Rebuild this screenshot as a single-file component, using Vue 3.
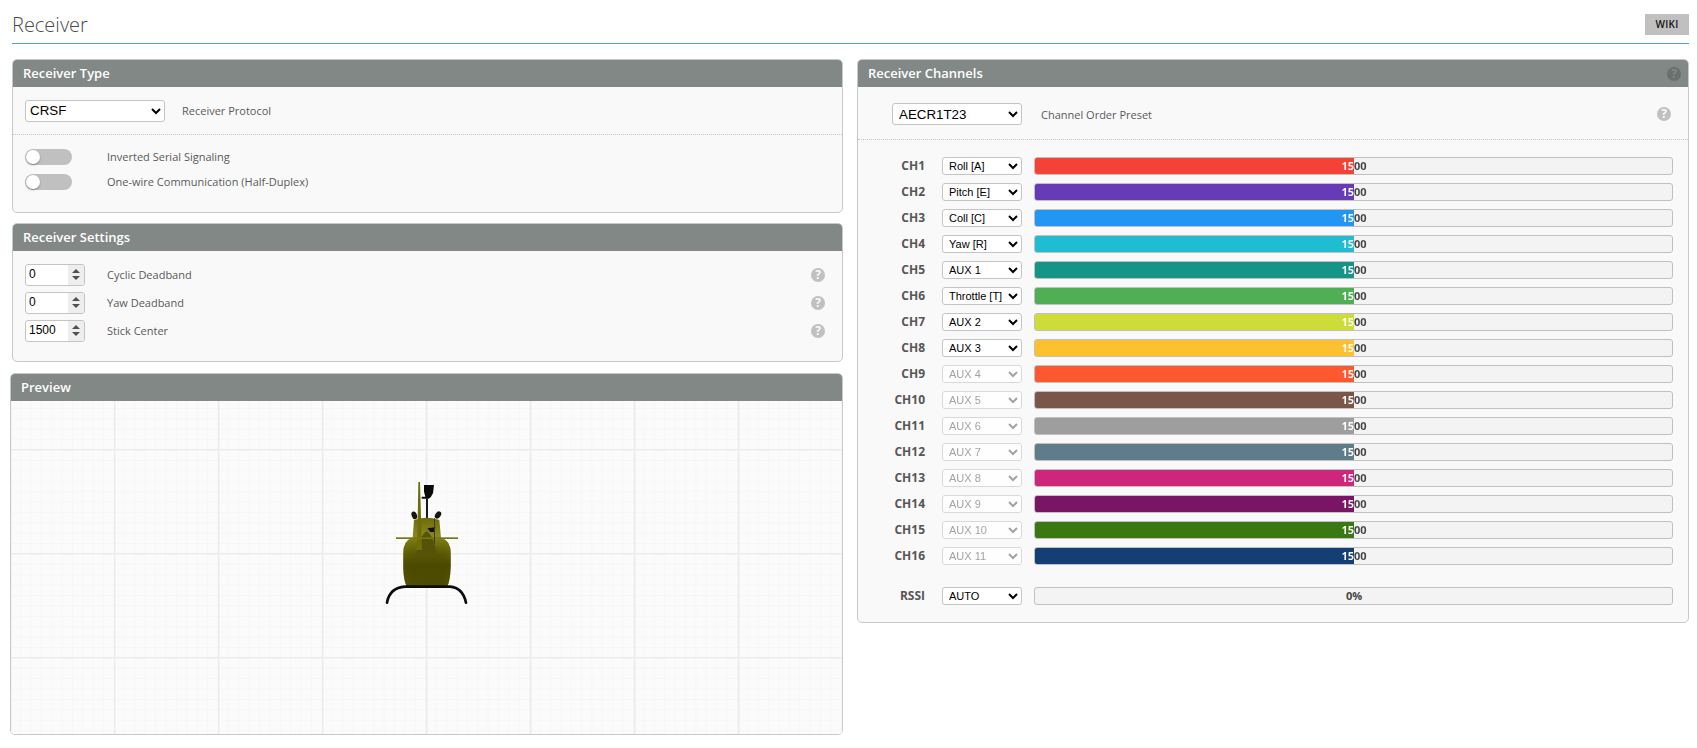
<script setup>
const channels = [
  { name: 'CH1', map: 'Roll [A]', color: '#f44336' },
  { name: 'CH2', map: 'Pitch [E]', color: '#673ab7' },
  { name: 'CH3', map: 'Coll [C]', color: '#2196f3' },
  { name: 'CH4', map: 'Yaw [R]', color: '#1fbcd2' },
  { name: 'CH5', map: 'AUX 1', color: '#159588' },
  { name: 'CH6', map: 'Throttle [T]', color: '#50ae55' },
  { name: 'CH7', map: 'AUX 2', color: '#cddc39' },
  { name: 'CH8', map: 'AUX 3', color: '#fdc02f' },
  { name: 'CH9', map: 'AUX 4', color: '#fe5830', off: true },
  { name: 'CH10', map: 'AUX 5', color: '#7b5548', off: true },
  { name: 'CH11', map: 'AUX 6', color: '#9e9e9e', off: true },
  { name: 'CH12', map: 'AUX 7', color: '#607c8a', off: true },
  { name: 'CH13', map: 'AUX 8', color: '#cf267d', off: true },
  { name: 'CH14', map: 'AUX 9', color: '#7a1464', off: true },
  { name: 'CH15', map: 'AUX 10', color: '#3a7814', off: true },
  { name: 'CH16', map: 'AUX 11', color: '#143f75', off: true },
]

const settings = [
  { label: 'Cyclic Deadband', value: 0 },
  { label: 'Yaw Deadband', value: 0 },
  { label: 'Stick Center', value: 1500 },
]
</script>

<template>
  <div class="page">
    <div class="title-bar">
      <span class="title">Receiver</span>
      <a class="wiki">WIKI</a>
    </div>

    <div class="columns">
      <div class="left">
        <section class="panel type-panel">
          <div class="panel-head">Receiver Type</div>
          <div class="proto-row">
            <select class="sel-proto"><option>CRSF</option></select>
            <span class="lbl">Receiver Protocol</span>
          </div>
          <div class="toggles">
            <div class="toggle-row">
              <span class="toggle"><i></i></span>
              <span class="lbl lbl-up">Inverted Serial Signaling</span>
            </div>
            <div class="toggle-row">
              <span class="toggle"><i></i></span>
              <span class="lbl lbl-up">One-wire Communication (Half-Duplex)</span>
            </div>
          </div>
        </section>

        <section class="panel settings-panel">
          <div class="panel-head">Receiver Settings</div>
          <div class="settings">
            <div v-for="s in settings" :key="s.label" class="setting-row">
              <div class="num-box">
                <input class="num" type="number" :value="s.value" />
                <span class="stepper"><i class="up"></i><i class="down"></i></span>
              </div>
              <span class="lbl">{{ s.label }}</span>
              <span class="help">?</span>
            </div>
          </div>
        </section>

        <section class="panel preview-panel">
          <div class="panel-head">Preview</div>
          <div class="preview">
            <!-- viewBox is 3x the drawn size, traced from the model -->
            <svg class="heli" width="180" height="170" viewBox="0 0 540 510">
              <defs>
                <linearGradient id="bodySide" x1="0" y1="0" x2="1" y2="0">
                  <stop offset="0" stop-color="#8c8b22" />
                  <stop offset="0.16" stop-color="#5a5804" />
                  <stop offset="0.84" stop-color="#4f4d00" />
                  <stop offset="1" stop-color="#8c8b26" />
                </linearGradient>
                <linearGradient id="bodyTop" x1="0" y1="0" x2="0" y2="1">
                  <stop offset="0" stop-color="#807e16" />
                  <stop offset="0.34" stop-color="#595700" stop-opacity="0.85" />
                  <stop offset="0.55" stop-color="#4c4a00" />
                  <stop offset="1" stop-color="#4c4a00" stop-opacity="0.8" />
                </linearGradient>
                <linearGradient id="cabin" x1="0" y1="0" x2="0" y2="1">
                  <stop offset="0" stop-color="#6f6d0c" />
                  <stop offset="1" stop-color="#8b8a22" />
                </linearGradient>
              </defs>
              <path d="M252 105 H282 L279 130 L272 142 L266 146 H245 V140 L256 140 L252 125 Z" fill="#0a0a0a" />
              <rect x="258" y="145" width="6" height="60" fill="#1a1a1a" />
              <ellipse cx="223" cy="196" rx="8" ry="12" transform="rotate(-20 223 196)" fill="#16160c" />
              <ellipse cx="294" cy="195" rx="8" ry="12" transform="rotate(35 294 195)" fill="#16160c" />
              <path d="M218 264 L222 210 Q260 196 298 210 L303 264 Z" fill="url(#cabin)" />
              <path d="M190 310 Q190 272 216 265 L304 265 Q332 272 332 310 L332 350 Q330 395 322 408 L200 408 Q190 390 190 350 Z" fill="url(#bodySide)" />
              <path d="M190 310 Q190 272 216 265 L304 265 Q332 272 332 310 L332 350 Q330 395 322 408 L200 408 Q190 390 190 350 Z" fill="url(#bodyTop)" />
              <path d="M226 320 Q238 258 260 243 Q282 258 292 320 Z" fill="#55530a" />
              <path d="M235 96 H240 L245 266 L246 300 H228 L232 266 Z" fill="#6f6d08" />
              <rect x="168" y="262" width="186" height="5" fill="#77750c" />
              <path d="M262 235 L286 232 L284 246 L271 246 Z" fill="#111" />
              <rect x="282" y="205" width="3" height="75" fill="#3a3c22" />
              <path d="M141 458 C146 430 165 412 195 410 H330 C355 412 372 430 378 458" fill="none" stroke="#0c0c0c" stroke-width="8" stroke-linecap="round" />
            </svg>
          </div>
        </section>
      </div>

      <section class="panel channels-panel">
        <div class="panel-head head-help">
          Receiver Channels
          <span class="help help-dark">?</span>
        </div>
        <div class="preset-row">
          <select class="sel-preset"><option>AECR1T23</option></select>
          <span class="lbl">Channel Order Preset</span>
          <span class="help">?</span>
        </div>
        <div class="bars">
          <div v-for="c in channels" :key="c.name" class="bar-row">
            <span class="ch">{{ c.name }}</span>
            <select class="sel-ch" :disabled="c.off"><option>{{ c.map }}</option></select>
            <div class="meter meter-on" :style="{ '--fill': c.color }">1500</div>
          </div>
          <div class="bar-row rssi-row">
            <span class="ch">RSSI</span>
            <select class="sel-ch"><option>AUTO</option></select>
            <div class="meter">0%</div>
          </div>
        </div>
      </section>
    </div>
  </div>
</template>

<style>
html, body {
  margin: 0;
  background: #fff;
  overflow: hidden;
}
</style>

<style scoped>
.page {
  box-sizing: border-box;
  width: 1697px;
  height: 748px;
  padding: 0 8px 0 12px;
  font-family: "Open Sans", "Liberation Sans", sans-serif;
  overflow: hidden;
}
.title-bar {
  display: flex;
  justify-content: space-between;
  align-items: flex-start;
  height: 43px;
  border-bottom: 1px solid #5ba0d0;
}
.title {
  font-size: 20px;
  font-weight: 300;
  color: #4a4a4a;
  line-height: 27px;
  margin-top: 11px;
}
.wiki {
  margin-top: 14px;
  width: 44px;
  height: 21px;
  background: #c0c0c0;
  color: #111;
  font-size: 10px;
  font-weight: 600;
  letter-spacing: 0.3px;
  line-height: 21px;
  text-align: center;
}
.columns {
  display: flex;
  gap: 14px;
  margin-top: 15px;
  align-items: flex-start;
}
.left {
  width: 831px;
  display: flex;
  flex-direction: column;
  gap: 10px;
}
.panel {
  box-sizing: border-box;
  border: 1px solid #c8c8c8;
  border-radius: 5px;
  background: #f9f9f9;
  overflow: hidden;
}
.panel-head {
  height: 27px;
  background: #828885;
  color: #fff;
  font-size: 13px;
  font-weight: 600;
  line-height: 27px;
  padding-left: 10px;
}
.head-help {
  display: flex;
  justify-content: space-between;
  align-items: center;
  padding-right: 7px;
}
.lbl {
  font-size: 11px;
  color: #595959;
}
.lbl-up {
  margin-bottom: 2px;
}
.type-panel {
  height: 154px;
}
.proto-row {
  box-sizing: border-box;
  display: flex;
  align-items: center;
  gap: 17px;
  height: 48px;
  padding-left: 12px;
  border-bottom: 1px dotted #c4c4c4;
}
select {
  box-sizing: border-box;
  border: 1px solid #c4c4c4;
  border-radius: 3px;
  background-color: #fff;
  color: #000;
  font-family: "Liberation Sans", sans-serif;
}
.sel-proto {
  width: 140px;
  height: 22px;
  font-size: 13.33px;
  padding-left: 0;
}
.toggles {
  display: flex;
  flex-direction: column;
  gap: 9px;
  padding: 14px 0 0 12px;
}
.toggle-row {
  display: flex;
  align-items: center;
  gap: 35px;
  height: 16px;
}
.toggle {
  display: block;
  box-sizing: border-box;
  width: 47px;
  height: 16px;
  border-radius: 8px;
  background: #c0c0c0;
  padding: 1px;
}
.toggle i {
  display: block;
  width: 14px;
  height: 14px;
  border-radius: 50%;
  background: #fff;
  box-shadow: 0 1px 2px rgba(0, 0, 0, 0.35);
}
.settings-panel {
  height: 139px;
}
.settings {
  display: flex;
  flex-direction: column;
  gap: 7px;
  padding: 13px 17px 0 12px;
}
.setting-row {
  display: flex;
  align-items: center;
  height: 21px;
}
.num-box {
  box-sizing: border-box;
  display: flex;
  width: 60px;
  height: 22px;
  margin-right: 22px;
  border: 1px solid #c4c4c4;
  border-radius: 3px;
  background: #fff;
  overflow: hidden;
}
.num {
  box-sizing: border-box;
  flex: 1;
  min-width: 0;
  height: 20px;
  margin: 0;
  border: 0;
  padding: 0 0 2px 3px;
  font-family: "Liberation Sans", sans-serif;
  font-size: 12px;
  color: #000;
  background: transparent;
  outline: none;
  appearance: textfield;
}
.num::-webkit-inner-spin-button {
  display: none;
}
.stepper {
  display: flex;
  flex-direction: column;
  justify-content: center;
  align-items: center;
  gap: 3px;
  width: 16px;
  background: #eee;
}
.stepper i {
  display: block;
  width: 0;
  height: 0;
  border-left: 4px solid transparent;
  border-right: 4px solid transparent;
}
.stepper .up {
  border-bottom: 4px solid #505050;
}
.stepper .down {
  border-top: 4px solid #505050;
}
.help {
  display: block;
  flex: none;
  width: 14px;
  height: 14px;
  border-radius: 50%;
  background: #c0c0c0;
  color: #f9f9f9;
  font-size: 12px;
  font-weight: 700;
  line-height: 14px;
  text-align: center;
  margin-left: auto;
}
.help-dark {
  background: #6b6f6d;
  color: #828885;
}
.preview-panel {
  width: 833px;
  height: 362px;
  margin: 1px 0 0 -2px;
}
.preview {
  height: 333px;
  display: flex;
  justify-content: center;
  background-color: #fbfbfb;
  background-image:
    linear-gradient(to bottom, #ececec 1px, #f3f3f3 1px, #f3f3f3 2px, transparent 2px),
    linear-gradient(to right, #ececec 1px, #f3f3f3 1px, #f3f3f3 2px, transparent 2px),
    linear-gradient(to bottom, #f6f6f6 1px, transparent 1px),
    linear-gradient(to right, #f6f6f6 1px, transparent 1px);
  background-size: 104px 104px, 104px 104px, 10.4px 10.4px, 10.4px 10.4px;
  background-position: 0 48px, 103px 0, 0 7px, 9px 0;
}
.heli {
  margin: 49px 0 0 6px;
}
.channels-panel {
  width: 832px;
  height: 564px;
}
.preset-row {
  box-sizing: border-box;
  display: flex;
  align-items: center;
  gap: 19px;
  height: 53px;
  padding: 2px 17px 0 34px;
  border-bottom: 1px dotted #c4c4c4;
}
.sel-preset {
  width: 130px;
  height: 22px;
  font-size: 13.33px;
  padding-left: 2px;
}
.bars {
  display: flex;
  flex-direction: column;
  gap: 8px;
  padding: 17px 15px 0 0;
}
.bar-row {
  display: grid;
  grid-template-columns: 84px 92px 1fr;
  grid-template-rows: 18px;
  height: 18px;
  align-items: center;
}
.rssi-row {
  margin-top: 14px;
}
.ch {
  font-size: 12px;
  font-weight: 700;
  line-height: 18px;
  color: #565656;
  text-align: right;
  padding-right: 17px;
}
.sel-ch {
  width: 80px;
  height: 18px;
  font-size: 11px;
  padding-left: 2px;
}
.sel-ch:disabled {
  color: #9a9a9a;
  border-color: #d6d6d6;
  opacity: 0.9;
}
.meter {
  box-sizing: border-box;
  height: 18px;
  border: 1px solid #c0c0c0;
  border-radius: 3px;
  background: #f3f3f3;
  font-size: 11px;
  font-weight: 700;
  line-height: 16px;
  color: #444;
  text-align: center;
  padding-left: 1px;
}
/* one label, white over the filled half and dark over the rest */
.meter-on {
  background:
    linear-gradient(90deg, #fff calc(50% + 1px), #444 calc(50% + 1px)) text,
    linear-gradient(90deg, var(--fill) calc(50% + 1px), #f3f3f3 calc(50% + 1px));
  color: transparent;
}
</style>
